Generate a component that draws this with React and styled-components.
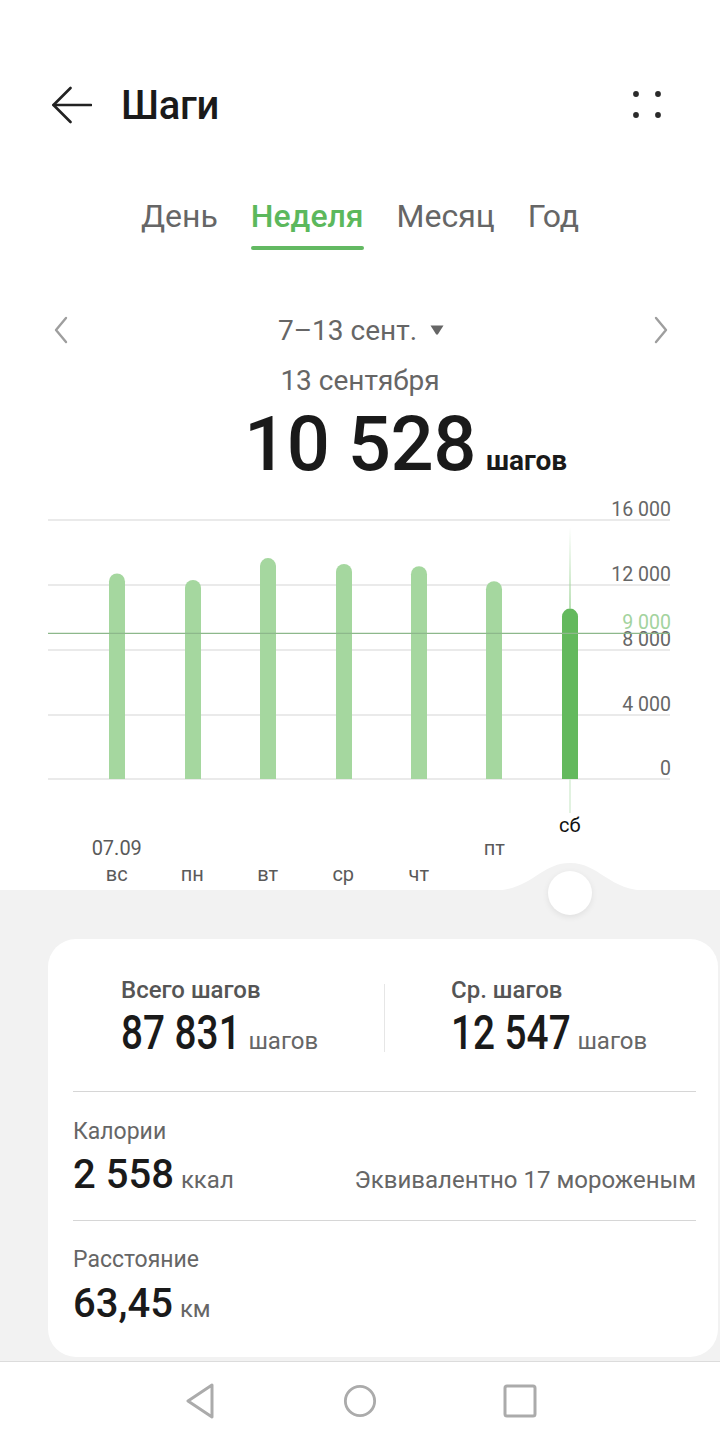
import React from "react";
import styled, { createGlobalStyle } from "styled-components";

const GlobalStyle = createGlobalStyle`
  body {
    margin: 0;
    background: #ffffff;
    font-family: Roboto, "Noto Sans", "Liberation Sans", sans-serif;
    color: #1a1a1a;
  }
  #root {
    width: 720px;
    overflow: hidden;
  }
`;

const Page = styled.div`
  width: 720px;
  min-height: 1440px;
  display: flex;
  flex-direction: column;
  background: #ffffff;
`;

const Header = styled.header`
  margin-top: 60px;
  height: 90px;
  display: flex;
  align-items: center;
  padding: 0 59px 0 52px;
`;

const IconButton = styled.div`
  display: flex;
  align-items: center;
  justify-content: center;
`;

const Title = styled.h1`
  margin: 0 0 0 29px;
  flex: 1;
  font-size: 40px;
  font-weight: 500;
  color: #1a1a1a;
  letter-spacing: -0.3px;
`;

const Tabs = styled.nav`
  margin-top: 46px;
  display: flex;
  justify-content: center;
  gap: 33px;
`;

const Tab = styled.div`
  display: flex;
  flex-direction: column;
  align-items: stretch;
  font-size: 32px;
  line-height: 40px;
  font-weight: ${(p) => (p.$active ? 500 : 400)};
  color: ${(p) => (p.$active ? "#5cb85c" : "#666666")};

  &::after {
    content: "";
    margin-top: 10px;
    height: 4px;
    border-radius: 2px;
    background: ${(p) => (p.$active ? "#63b962" : "transparent")};
  }
`;

const DateRow = styled.div`
  margin-top: 56px;
  height: 48px;
  display: flex;
  align-items: center;
  justify-content: space-between;
  padding: 0 52px 0 54px;
`;

const RangeLabel = styled.div`
  display: flex;
  align-items: center;
  gap: 13px;
  font-size: 28px;
  color: #666666;
`;

const DayLabel = styled.div`
  margin-top: 11px;
  text-align: center;
  font-size: 28px;
  line-height: 32px;
  color: #666666;
`;

const BigRow = styled.div`
  margin-top: 9px;
  display: grid;
  grid-template-columns: 1fr auto 1fr;
  align-items: baseline;
`;

const BigNumber = styled.div`
  grid-column: 2;
  font-size: 76px;
  line-height: 76px;
  font-weight: 500;
  color: #1a1a1a;
  letter-spacing: -0.5px;
`;

const BigUnit = styled.div`
  grid-column: 3;
  padding-left: 10px;
  font-size: 28px;
  font-weight: 700;
  color: #1a1a1a;
`;

const ChartSvg = styled.svg`
  display: block;
  margin-top: 18px;
  overflow: visible;
  font-family: Roboto, "Noto Sans", sans-serif;
`;

const AxisGrid = styled.div`
  display: grid;
  grid-template-columns: repeat(7, 75.5px);
  grid-template-rows: 26px 20px 32px;
  padding-left: 79px;
  margin-top: -3px;
`;

const AxisText = styled.div`
  grid-column: ${(p) => p.$col};
  grid-row: ${(p) => p.$row};
  display: flex;
  align-items: center;
  justify-content: center;
  font-size: 20px;
  color: ${(p) => (p.$strong ? "#111111" : "#5a5a5a")};
`;

const Summary = styled.section`
  position: relative;
  flex: 1;
  background: #f2f2f2;
  padding: 49px 0 4px 48px;
`;

const Bump = styled.svg`
  position: absolute;
  top: -28px;
  left: 490px;
`;

const Knob = styled.div`
  position: absolute;
  top: -19px;
  left: 548px;
  width: 44px;
  height: 44px;
  border-radius: 50%;
  background: #ffffff;
  box-shadow: 0 2px 6px rgba(0, 0, 0, 0.08);
`;

const Card = styled.div`
  width: 670px;
  box-sizing: border-box;
  background: #ffffff;
  border-radius: 28px;
  padding: 0 22px 0 25px;
`;

const TopStats = styled.div`
  display: grid;
  grid-template-columns: 1fr 1px 1fr;
  align-items: center;
  padding: 37px 0 32px;
  border-bottom: 1px solid #d6d6d6;
`;

const StatCol = styled.div`
  padding-left: ${(p) => p.$pad}px;
`;

const VDivider = styled.div`
  height: 68px;
  background: #e6e6e6;
`;

const StatLabel = styled.div`
  font-size: ${(p) => (p.$bold ? 24 : 23)}px;
  line-height: 28px;
  font-weight: ${(p) => (p.$bold ? 500 : 400)};
  color: ${(p) => (p.$bold ? "#555555" : "#666666")};
`;

const ValueLine = styled.div`
  display: flex;
  align-items: baseline;
  margin-top: ${(p) => p.$gap || 3}px;
`;

const CondNumber = styled.span`
  display: inline-block;
  font-size: 49px;
  line-height: 52px;
  font-weight: 500;
  color: #1a1a1a;
  transform: scaleX(0.79);
  transform-origin: left bottom;
  margin-right: ${(p) => p.$trim}px;
`;

const Number = styled.span`
  font-size: 40px;
  line-height: 46px;
  font-weight: 500;
  color: #1a1a1a;
`;

const Unit = styled.span`
  margin-left: ${(p) => p.$gap ?? 7}px;
  font-size: 24px;
  color: #666666;
`;

const Note = styled.span`
  margin-left: auto;
  font-size: 24px;
  color: #666666;
`;

const Section = styled.div`
  padding: ${(p) => p.$pad};
  border-bottom: ${(p) => (p.$last ? "none" : "1px solid #d6d6d6")};
`;

const NavBar = styled.footer`
  height: 78px;
  border-top: 1px solid #dcdcdc;
  background: #ffffff;
  display: flex;
  align-items: center;
  justify-content: center;
  gap: 126px;
`;

const NavIcon = styled.div`
  width: 34px;
  display: flex;
  justify-content: center;
`;

const bars = [12700, 12300, 13650, 13280, 13150, 12223, 10528];
const base = 779;
const perStep = 0.016188;
const centers = [117, 193, 268, 344, 419, 494, 570];

function barPath(cx, top) {
  const r = 8;
  return `M${cx - r} ${base} V${top + r} A${r} ${r} 0 0 1 ${cx + r} ${top + r} V${base} Z`;
}

function Chart() {
  const grid = [
    { y: 520, label: "16 000" },
    { y: 585, label: "12 000" },
    { y: 650, label: "8 000" },
    { y: 715, label: "4 000" },
    { y: 779, label: "0" },
  ];
  const goalY = base - 9000 * perStep;
  const selTop = base - bars[6] * perStep;
  return (
    <ChartSvg width="720" height="315" viewBox="0 500 720 315">
      <defs>
        <linearGradient id="sel" x1="0" y1="0" x2="0" y2="1">
          <stop offset="0" stopColor="#a5d79f" stopOpacity="0" />
          <stop offset="1" stopColor="#a5d79f" stopOpacity="1" />
        </linearGradient>
      </defs>
      {grid.map((g) => (
        <line key={g.y} x1="48" x2="670" y1={g.y} y2={g.y} stroke="#e3e3e3" strokeWidth="1.5" />
      ))}
      {grid.map((g) => (
        <text key={g.label} x="671" y={g.y - 4} textAnchor="end" fontSize="19.5" fill="#666">
          {g.label}
        </text>
      ))}
      <text x="671" y={goalY - 4.5} textAnchor="end" fontSize="19.5" fill="#a3d39e">
        9 000
      </text>
      <rect x="569.25" y="527" width="1.5" height={selTop - 527} fill="url(#sel)" />
      <rect x="569.25" y={base} width="1.5" height="34" fill="#d8eed6" />
      {bars.map((v, i) => (
        <path
          key={i}
          d={barPath(centers[i], base - v * perStep)}
          fill={i === 6 ? "#63b95d" : "#a5d79f"}
        />
      ))}
      <line x1="48" x2="670" y1={goalY} y2={goalY} stroke="#8db88b" strokeWidth="1.2" />
    </ChartSvg>
  );
}

export default function App() {
  return (
    <Page>
      <GlobalStyle />
      <Header>
        <IconButton>
          <svg width="40" height="38" viewBox="0 0 40 38" fill="none" stroke="#222" strokeWidth="2.6" strokeLinecap="round">
            <path d="M1.5 19 H39" />
            <path d="M18.5 2 L1.5 19 L18.5 36" strokeLinejoin="round" />
          </svg>
        </IconButton>
        <Title>Шаги</Title>
        <IconButton>
          <svg width="28" height="30" viewBox="0 0 28 30" fill="#2a2a2a">
            <circle cx="3" cy="4" r="2.9" />
            <circle cx="25" cy="4" r="2.9" />
            <circle cx="3" cy="25" r="2.9" />
            <circle cx="25" cy="25" r="2.9" />
          </svg>
        </IconButton>
      </Header>

      <Tabs>
        <Tab>День</Tab>
        <Tab $active>Неделя</Tab>
        <Tab>Месяц</Tab>
        <Tab>Год</Tab>
      </Tabs>

      <DateRow>
        <IconButton>
          <svg width="14" height="28" viewBox="0 0 14 28" fill="none" stroke="#9e9e9e" strokeWidth="2.4" strokeLinecap="round" strokeLinejoin="round">
            <path d="M12 2 L2 14 L12 26" />
          </svg>
        </IconButton>
        <RangeLabel>
          <span>7–13 сент.</span>
          <svg width="14" height="10" viewBox="0 0 14 10" fill="#666">
            <path d="M0.5 0.5 H13.5 L8.1 9 Q7 10.5 5.9 9 Z" />
          </svg>
        </RangeLabel>
        <IconButton>
          <svg width="14" height="28" viewBox="0 0 14 28" fill="none" stroke="#9e9e9e" strokeWidth="2.4" strokeLinecap="round" strokeLinejoin="round">
            <path d="M2 2 L12 14 L2 26" />
          </svg>
        </IconButton>
      </DateRow>

      <DayLabel>13 сентября</DayLabel>
      <BigRow>
        <BigNumber>10 528</BigNumber>
        <BigUnit>шагов</BigUnit>
      </BigRow>

      <Chart />

      <AxisGrid>
        <AxisText $col={7} $row={1} $strong>сб</AxisText>
        <AxisText $col={1} $row={2}>07.09</AxisText>
        <AxisText $col={6} $row={2}>пт</AxisText>
        <AxisText $col={1} $row={3}>вс</AxisText>
        <AxisText $col={2} $row={3}>пн</AxisText>
        <AxisText $col={3} $row={3}>вт</AxisText>
        <AxisText $col={4} $row={3}>ср</AxisText>
        <AxisText $col={5} $row={3}>чт</AxisText>
      </AxisGrid>

      <Summary>
        <Bump width="160" height="29" viewBox="0 0 160 29">
          <path d="M0 29 C 42 29, 50 1, 80 1 C 110 1, 118 29, 160 29 Z" fill="#f2f2f2" />
        </Bump>
        <Knob />
        <Card>
          <TopStats>
            <StatCol $pad={48}>
              <StatLabel $bold>Всего шагов</StatLabel>
              <ValueLine>
                <CondNumber $trim={-24}>87 831</CondNumber>
                <Unit $gap={0}>шагов</Unit>
              </ValueLine>
            </StatCol>
            <VDivider />
            <StatCol $pad={66}>
              <StatLabel $bold>Ср. шагов</StatLabel>
              <ValueLine>
                <CondNumber $trim={-25}>12 547</CondNumber>
                <Unit $gap={0}>шагов</Unit>
              </ValueLine>
            </StatCol>
          </TopStats>

          <Section $pad="26px 0 22px">
            <StatLabel>Калории</StatLabel>
            <ValueLine $gap={6}>
              <Number>2 558</Number>
              <Unit>ккал</Unit>
              <Note>Эквивалентно 17 мороженым</Note>
            </ValueLine>
          </Section>

          <Section $pad="25px 0 30px" $last>
            <StatLabel>Расстояние</StatLabel>
            <ValueLine $gap={7}>
              <Number>63,45</Number>
              <Unit>км</Unit>
            </ValueLine>
          </Section>
        </Card>
      </Summary>

      <NavBar>
        <NavIcon>
          <svg width="30" height="36" viewBox="0 0 30 36" fill="none" stroke="#ababab" strokeWidth="3" strokeLinejoin="round">
            <path d="M27 2 L3 18 L27 34 Z" />
          </svg>
        </NavIcon>
        <NavIcon>
          <svg width="36" height="36" viewBox="0 0 36 36" fill="none" stroke="#ababab" strokeWidth="3">
            <circle cx="18" cy="18" r="15.5" />
          </svg>
        </NavIcon>
        <NavIcon>
          <svg width="34" height="34" viewBox="0 0 34 34" fill="none" stroke="#ababab" strokeWidth="3">
            <rect x="2" y="2" width="30" height="30" rx="2" />
          </svg>
        </NavIcon>
      </NavBar>
    </Page>
  );
}
